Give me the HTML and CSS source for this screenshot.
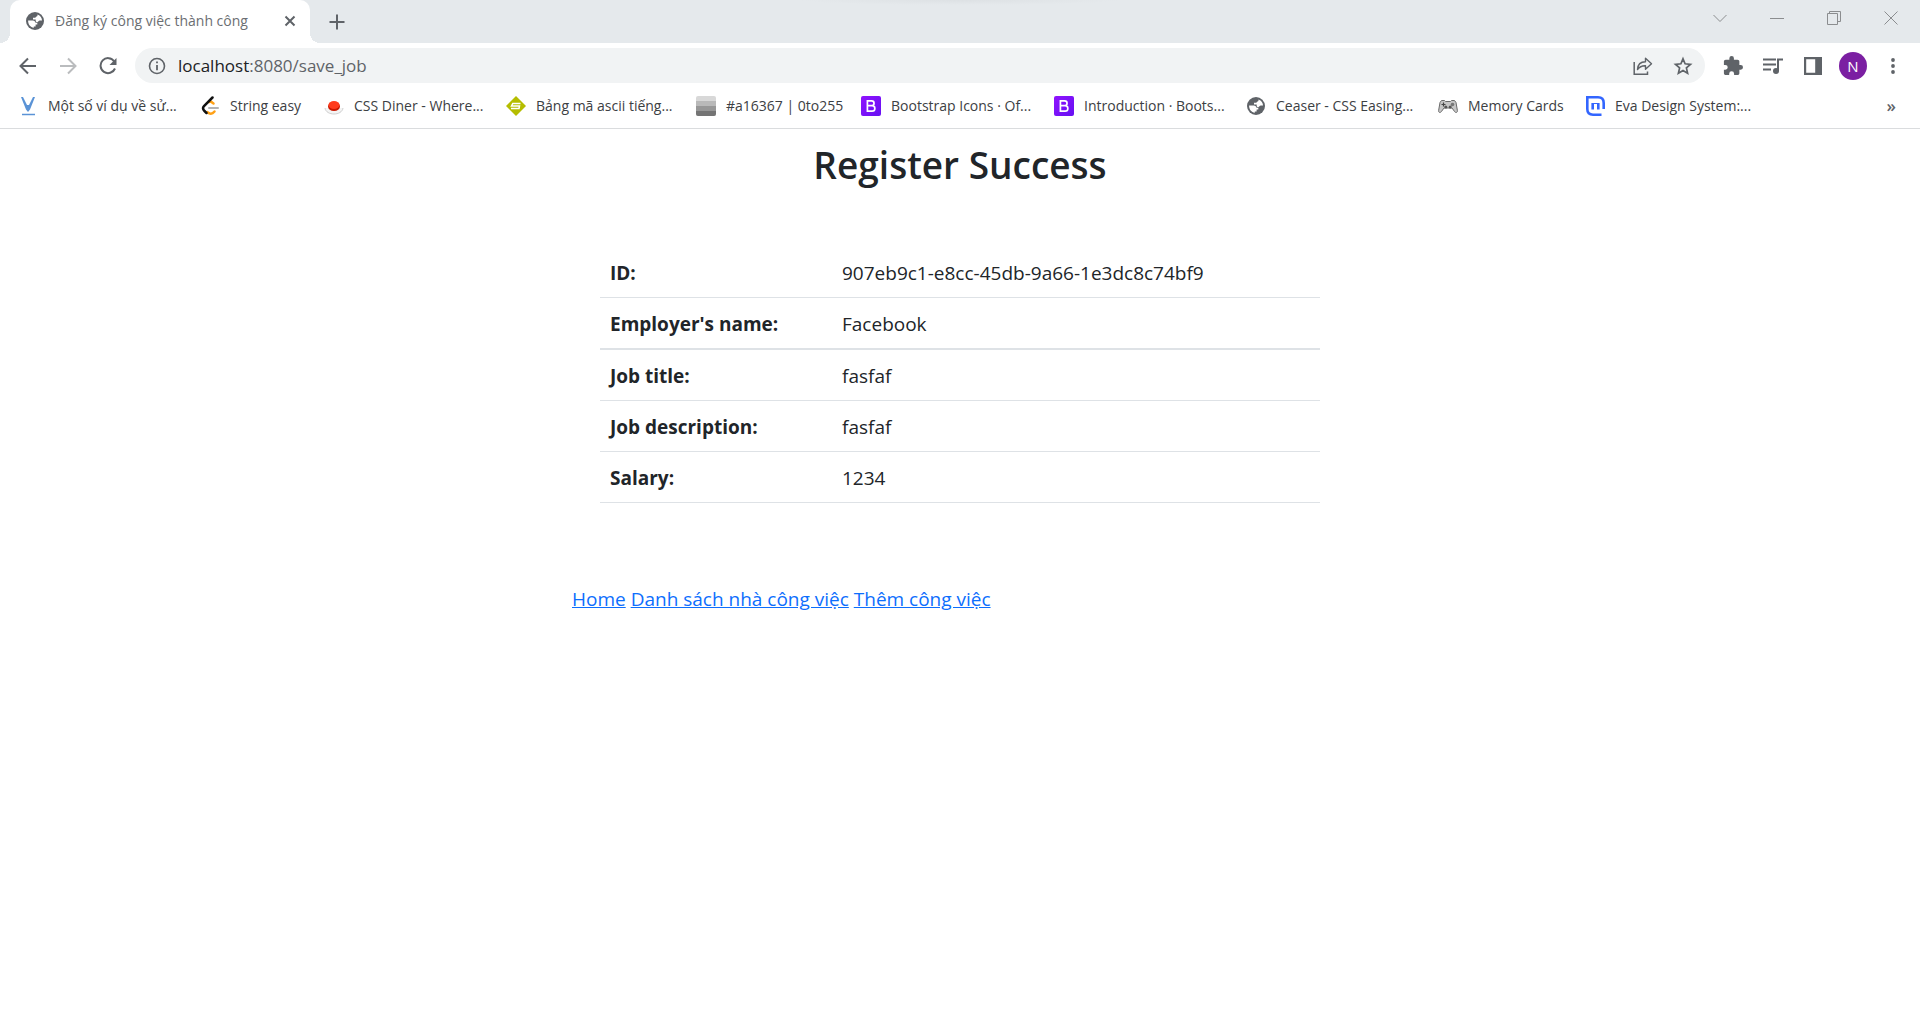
FILE: index.html
```html
<!DOCTYPE html>
<html lang="vi">
<head>
<meta charset="utf-8">
<meta name="viewport" content="width=device-width, initial-scale=1">
<title>Đăng ký công việc thành công</title>
<link rel="stylesheet" href="styles.css">
</head>
<body>
<svg class="defs" aria-hidden="true">
  <defs>
    <symbol id="globe" viewBox="0 0 18 18">
      <circle cx="9" cy="9" r="9" fill="#5f6368"/>
      <path d="M11.500 2.400C14.500 3.500 16 6 16 8.600h-2.200c-1.300 0-1.300 1.600-2.600 1.600-.9 0-1.500-.5-1.500-1.400V7.600H7V5.800h1.800c.9 0 .9-1.400 1.800-1.400.8 0 .9-1 .9-2zM2.100 8.500h4.700c1.500 0 2.700 1 2.700 2.300h1.800v1.800H9.600v1.900H7.800v1.200C4.500 15.200 2 12.500 2.100 8.500z" fill="#fff"/>
    </symbol>
    <linearGradient id="violet" x1="0" y1="0" x2="1" y2="1"><stop stop-color="#9013fe"/><stop offset="1" stop-color="#6610f2"/></linearGradient>
    <symbol id="bootstrap" viewBox="0 0 20 20">
      <rect width="20" height="20" rx="2" fill="url(#violet)"/>
      <path d="M6.400 4.800h4.200a2.400 2.400 0 0 1 0 4.900H6.400zM6.400 9.700h4.700a2.700 2.700 0 0 1 0 5.500H6.400z" fill="none" stroke="#fff" stroke-width="1.700"/>
    </symbol>
  </defs>
</svg>

<header class="browser">
  <div class="tabstrip">
    <div class="tab">
      <svg width="18" height="18"><use href="#globe"/></svg>
      <span class="tab-title">Đăng ký công việc thành công</span>
      <button class="icon-button" aria-label="Close tab"><svg width="12" height="12" viewBox="0 0 12 12"><path d="M1.500 1.500l9 9m0-9l-9 9" stroke="#5f6368" stroke-width="2"/></svg></button>
    </div>
    <button class="icon-button new-tab" aria-label="New tab"><svg width="16" height="16" viewBox="0 0 16 16"><path d="M8 .5v15M.5 8h15" stroke="#5f6368" stroke-width="2"/></svg></button>
    <div class="window-controls">
      <button class="icon-button" aria-label="Search tabs"><svg width="14" height="14" viewBox="0 0 14 14"><path d="M.5 4L7 10.500 13.500 4" fill="none" stroke="#8b8d8f"/></svg></button>
      <button class="icon-button" aria-label="Minimize"><svg width="14" height="14" viewBox="0 0 14 14"><path d="M0 7.500h14" stroke="#8b8d8f"/></svg></button>
      <button class="icon-button" aria-label="Restore"><svg width="14" height="14" viewBox="0 0 14 14"><path d="M.5 2.500h10v11H.5zM2.500 2.500v-2h11v10h-3" fill="none" stroke="#8b8d8f"/></svg></button>
      <button class="icon-button" aria-label="Close"><svg width="14" height="14" viewBox="0 0 14 14"><path d="M.5.5l13 13m0-13l-13 13" stroke="#8b8d8f"/></svg></button>
    </div>
  </div>

  <div class="toolbar">
    <div class="nav-buttons">
      <button class="icon-button" aria-label="Back"><svg width="18" height="18" viewBox="0 0 18 18"><path d="M17 9H2M9 1.500L1.500 9 9 16.500" fill="none" stroke="#5f6368" stroke-width="2"/></svg></button>
      <button class="icon-button" aria-label="Forward"><svg width="18" height="18" viewBox="0 0 18 18"><path d="M1 9h15M9 1.500L16.500 9 9 16.500" fill="none" stroke="#babcbe" stroke-width="2"/></svg></button>
      <button class="icon-button" aria-label="Reload"><svg width="18" height="18" viewBox="0 0 18 18"><path d="M15.200 4.300A7.500 7.500 0 1 0 16 11.500" fill="none" stroke="#5f6368" stroke-width="2"/><path d="M17.500 1v7h-7z" fill="#5f6368"/></svg></button>
    </div>
    <div class="address">
      <svg width="18" height="18" viewBox="0 0 18 18"><circle cx="9" cy="9" r="7.500" fill="none" stroke="#5f6368" stroke-width="1.600"/><path d="M9 4.500v1.800M9 8v5.300" stroke="#5f6368" stroke-width="1.800"/></svg>
      <span class="url"><span class="host">localhost</span>:8080/save_job</span>
      <button class="icon-button" aria-label="Share"><svg width="20" height="20" viewBox="0 0 20 20"><path d="M1.200 6v12.200h13.300V15.500" fill="none" stroke="#5f6368" stroke-width="1.500"/><path d="M4.500 13.500C4.800 8.500 8 5.800 12.500 5.800V2.200l6 5.500-6 5.500V9.700c-3.500-.2-6 1-8 3.800z" fill="none" stroke="#5f6368" stroke-width="1.400" stroke-linejoin="round"/></svg></button>
      <button class="icon-button" aria-label="Bookmark this page"><svg width="20" height="20" viewBox="0 0 20 20"><path d="M10 2.800l2.100 5 5.400.5-4.100 3.600 1.200 5.300L10 14.400l-4.600 2.800 1.200-5.300-4.100-3.600 5.400-.5z" fill="none" stroke="#5f6368" stroke-width="1.700"/></svg></button>
    </div>
    <div class="tools">
      <button class="icon-button" aria-label="Extensions"><svg width="20" height="20" viewBox="1 1 22 22"><path d="M20.500 11H19V7c0-1.100-.9-2-2-2h-4V3.500a2.500 2.500 0 0 0-5 0V5H4c-1.100 0-2 .9-2 2v3.800h1.500a2.700 2.700 0 0 1 0 5.400H2V20c0 1.100.9 2 2 2h3.800v-1.500a2.700 2.700 0 0 1 5.400 0V22H17c1.100 0 2-.9 2-2v-4h1.500a2.500 2.500 0 0 0 0-5z" fill="#5f6368"/></svg></button>
      <button class="icon-button" aria-label="Media"><svg width="20" height="20" viewBox="0 0 20 20"><path d="M0 3.500h13M0 8.500h13M0 13.500h8" stroke="#5f6368" stroke-width="2"/><circle cx="13" cy="15" r="3" fill="#5f6368"/><path d="M15 15V3.500h5" fill="none" stroke="#5f6368" stroke-width="2"/></svg></button>
      <button class="icon-button" aria-label="Side panel"><svg width="20" height="20" viewBox="0 0 20 20"><path d="M1 1h18v18H1zM3.200 3.200v13.600h9V3.200z" fill="#5f6368" fill-rule="evenodd"/></svg></button>
      <button class="icon-button avatar" aria-label="Profile">N</button>
      <button class="icon-button menu" aria-label="Menu"><svg width="4" height="18" viewBox="0 0 4 18"><g fill="#5f6368"><circle cx="2" cy="3" r="1.900"/><circle cx="2" cy="9" r="1.900"/><circle cx="2" cy="15" r="1.900"/></g></svg></button>
    </div>
  </div>

  <nav class="bookmarks" aria-label="Bookmarks">
    <a href="#"><svg width="20" height="20" viewBox="0 0 20 20"><path d="M3 1h2l4 8h2l4-8h2l-5 12.500-2 2.500-2-2.500z" fill="#5a93d6"/><path d="M4 18.500h13" stroke="#5a93d6" stroke-width="1.500"/></svg><span>Một số ví dụ về sử...</span></a>
    <a href="#"><svg width="20" height="20" viewBox="0 0 20 20" fill="none" stroke-linecap="round" stroke-width="2.500"><path d="M14.500 15.500c-2.500 3-5 2.500-7 .7" stroke="#ffa116"/><path d="M9 6l1-1 3.500 2.500" stroke="#ffa116"/><path d="M9 12h9" stroke="#b3b3b3" stroke-width="2"/><path d="M12.500 1.500L4 10c-1.500 1.700-1 3.500.5 5l2 2" stroke="#111"/></svg><span>String easy</span></a>
    <a href="#"><svg width="20" height="20" viewBox="0 0 20 20"><path d="M1 12c1 8 17 8 18 0" fill="#f4f4f4" stroke="#cfcfcf"/><ellipse cx="10" cy="10.500" rx="6" ry="4.500" fill="#c91800"/><ellipse cx="10" cy="9" rx="5.500" ry="4" fill="#ff3b1c"/></svg><span>CSS Diner - Where...</span></a>
    <a href="#"><svg width="20" height="20" viewBox="0 0 20 20"><path d="M10 0l10 10-10 10L0 10z" fill="#b5bd00"/><path d="M14.500 7.500H6.800L5.500 10h8L13 12.500H5" fill="none" stroke="#fff" stroke-width="1.500"/></svg><span>Bảng mã ascii tiếng...</span></a>
    <a href="#"><svg width="20" height="20" viewBox="0 0 20 20"><rect width="20" height="20" rx="2" fill="#d8d8d8"/><path d="M0 5h20v5H0z" fill="#b9b9b9"/><path d="M0 10h20v5H0z" fill="#979797"/><path d="M0 15h20v3q0 2-2 2H2q-2 0-2-2z" fill="#747474"/></svg><span>#a16367 | 0to255</span></a>
    <a href="#"><svg width="20" height="20"><use href="#bootstrap"/></svg><span>Bootstrap Icons · Of...</span></a>
    <a href="#"><svg width="20" height="20"><use href="#bootstrap"/></svg><span>Introduction · Boots...</span></a>
    <a href="#"><svg width="20" height="20" viewBox="-1 -1 20 20"><use href="#globe" width="18" height="18"/></svg><span>Ceaser - CSS Easing...</span></a>
    <a href="#"><svg width="20" height="20" viewBox="0 0 20 20"><path d="M3.500 4.500h3l1 1h5l1-1h3l1.500 2 1.400 8c.2 2.500-2 2.500-3 .8L14 12H6l-2.400 3.300c-1 1.700-3.200 1.700-3-.8l1.400-8z" fill="#c6c6c6" stroke="#6a6a6a"/><path d="M3.500 8.500h4m-2-2v4" stroke="#444" stroke-width="1.200"/><circle cx="14.500" cy="8.500" r="1.800" fill="#777"/><circle cx="7.800" cy="11" r="1.500" fill="#555"/><circle cx="12.200" cy="11" r="1.500" fill="#555"/></svg><span>Memory Cards</span></a>
    <a href="#"><svg width="20" height="20" viewBox="0 0 20 20"><path d="M16.500 18.700H8q-5.700 0-5.700-5.700V1.300H13q5.700 0 5.700 5.700v6" fill="none" stroke="#3366ff" stroke-width="2.600"/><path d="M7.700 7v6.500M13.300 7v6.500" stroke="#3366ff" stroke-width="2.600"/><path d="M7 7.500h7" stroke="#3366ff"/></svg><span>Eva Design System:...</span></a>
    <button class="icon-button overflow" aria-label="More bookmarks">»</button>
  </nav>
</header>

<main class="container">
  <h1>Register Success</h1>
  <table class="details">
    <tbody>
      <tr><th scope="row">ID:</th><td>907eb9c1-e8cc-45db-9a66-1e3dc8c74bf9</td></tr>
      <tr><th scope="row">Employer's name:</th><td>Facebook</td></tr>
    </tbody>
    <tbody>
      <tr><th scope="row">Job title:</th><td>fasfaf</td></tr>
      <tr><th scope="row">Job description:</th><td>fasfaf</td></tr>
      <tr><th scope="row">Salary:</th><td>1234</td></tr>
    </tbody>
  </table>
  <nav class="links">
    <a href="#">Home</a>
    <a href="#">Danh sách nhà công việc</a>
    <a href="#">Thêm công việc</a>
  </nav>
</main>
</body>
</html>
```
FILE: styles.css
```css
* { box-sizing: border-box; }

body {
  margin: 0;
  background: #fff;
  color: #212529;
  font: 19px/30px "Open Sans", "Noto Sans", sans-serif;
}

.defs { position: absolute; width: 0; height: 0; }
svg { display: block; flex: none; }

.icon-button {
  display: flex;
  align-items: center;
  justify-content: center;
  padding: 0;
  border: 0;
  background: none;
  color: #5f6368;
  font: inherit;
}

/* Browser frame */
.browser { border-bottom: 1px solid #dadcde; }

.tabstrip {
  display: flex;
  height: 43px;
  padding-left: 10px;
  background: radial-gradient(ellipse 160px 5px at 50% 0, #dde1e4, #e5e9ec) #e5e9ec;
}

.tab {
  position: relative;
  display: flex;
  align-items: center;
  width: 300px;
  padding: 0 14px 2px 16px;
  border-radius: 10px 10px 0 0;
  background: #fff;
}

/* Flared feet of the active tab */
.tab::before,
.tab::after {
  content: "";
  position: absolute;
  bottom: 0;
  width: 10px;
  height: 10px;
}
.tab::before { right: 100%; background: radial-gradient(circle at 0 0, transparent 10px, #fff 10px); }
.tab::after { left: 100%; background: radial-gradient(circle at 100% 0, transparent 10px, #fff 10px); }

.tab-title {
  flex: 1;
  margin-left: 11px;
  color: #6b6e72;
  font-size: 14px;
  white-space: nowrap;
}

.new-tab { width: 54px; }

.window-controls { display: flex; margin-left: auto; padding: 0 1px 7px 0; }
.window-controls .icon-button { width: 57px; }

.toolbar {
  display: flex;
  align-items: center;
  height: 45px;
}

.nav-buttons { display: flex; gap: 22px; padding: 0 18px 0 19px; }

.address {
  display: flex;
  flex: 1;
  align-items: center;
  gap: 20px;
  height: 35px;
  padding: 0 12px 0 13px;
  border-radius: 18px;
  background: #f1f3f4;
}

.url { flex: 1; margin-left: -8px; color: #5f6368; font-size: 17px; }
.host { color: #202124; }

.tools { display: flex; align-items: center; gap: 20px; padding: 0 17px 0 18px; }

.avatar {
  width: 28px;
  height: 28px;
  margin: 0 -4px;
  border-radius: 50%;
  background: #7b1fa2;
  color: #fff;
  font-size: 15px;
}

.menu { width: 20px; }

.bookmarks {
  display: grid;
  grid-template-columns: 182px 124px 182px 190px 165px 193px 192px 192px 147px 1fr auto;
  align-items: center;
  height: 40px;
  padding: 0 24px 4px 18px;
}

.bookmarks a {
  display: flex;
  align-items: center;
  gap: 10px;
  color: #3c4043;
  font-size: 14px;
  line-height: 20px;
  text-decoration: none;
  white-space: nowrap;
}

.overflow { font-size: 17px; font-weight: 600; line-height: 20px; }

/* Page */
.container {
  width: 60%;
  max-width: 776px;
  margin: 0 auto;
}

h1 {
  margin: 12px 0 58px;
  font-size: 37px;
  font-weight: 600;
  line-height: 48px;
  text-align: center;
}

.details {
  width: calc(100% - 56px);
  margin: 0 auto;
  border-spacing: 0;
}

.details th,
.details td {
  padding: 11px 10px 9px;
  border-bottom: 1px solid #dee2e6;
  text-align: left;
}

.details th { width: 232px; font-weight: 700; }

.details tbody:first-child tr:last-child > * { border-bottom-width: 2px; }

.links { margin-top: 81px; }
.links a { color: #0d6efd; }
```
